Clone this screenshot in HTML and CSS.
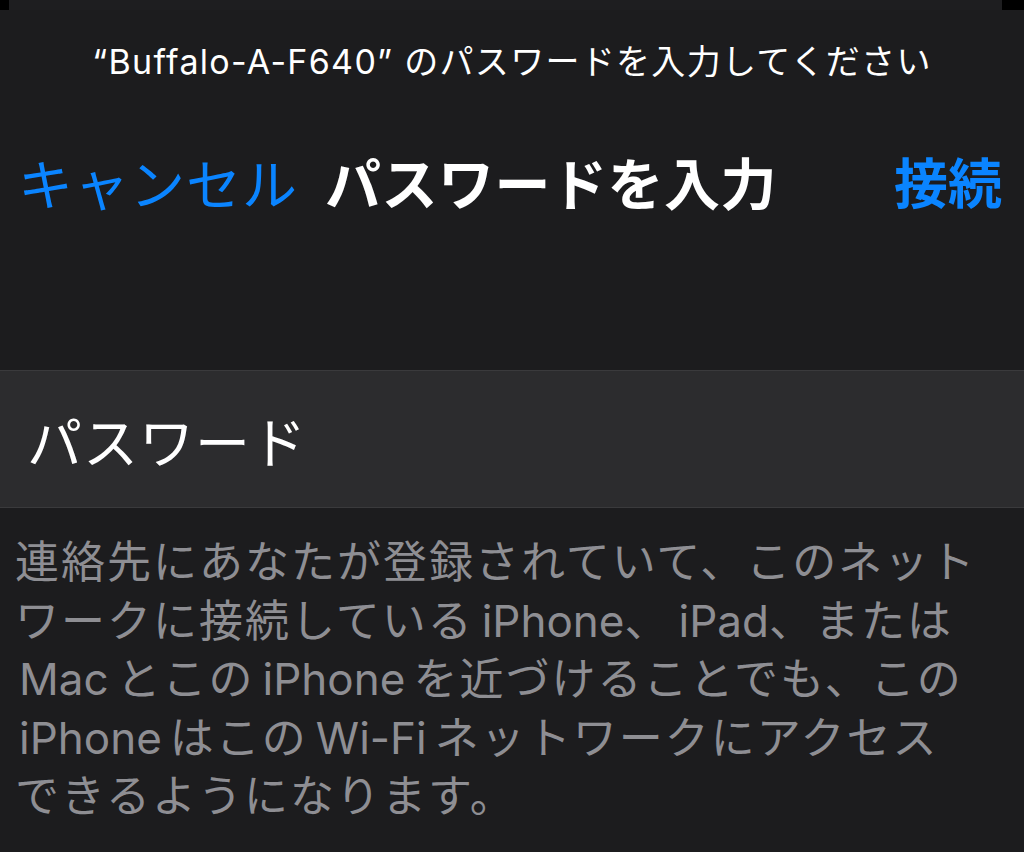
FILE: index.html
```html
<!DOCTYPE html>
<html lang="ja">
<head>
    <meta charset="UTF-8">
    <meta name="viewport" content="width=device-width, initial-scale=1.0">
    <title>パスワードを入力</title>
    <link rel="stylesheet" href="styles.css">
</head>
<body>
    <div class="backdrop">
        <div class="back-sheet"></div>
    </div>
    <div class="sheet">
        <div class="prompt">“Buffalo-A-F640” のパスワードを入力してください</div>
        <div class="navbar">
            <button class="nav-btn cancel">キャンセル</button>
            <div class="nav-title">パスワードを入力</div>
            <div class="spacer"></div>
            <button class="nav-btn join">接続</button>
        </div>
        <div class="field">
            <span class="field-label">パスワード</span>
        </div>
        <p class="footer">
            連絡先にあなたが登録されていて、このネット<br>
            ワークに接続している<span class="latin tight">iPhone</span>、<span class="latin tight">iPad</span>、または<br>
            <span class="latin first">Mac</span>とこの<span class="latin">iPhone</span>を近づけることでも、この<br>
            <span class="latin first">iPhone</span>はこの<span class="latin">Wi-Fi</span>ネットワークにアクセス<br>
            できるようになります。
        </p>
    </div>
</body>
</html>
```

FILE: styles.css
```css
body {
    margin: 0;
    background-color: #000;
    font-family: Inter, "Noto Sans CJK JP", sans-serif;
    color: #fff;
    height: 100vh;
    display: flex;
    flex-direction: column;
}
.backdrop {
    height: 10px;
    display: flex;
}
.back-sheet {
    flex: 1;
    margin: 0 22px 0 9px;
    background: #1e1e20;
}
.sheet {
    flex: 1;
    background: #1c1c1e;
}
.prompt {
    padding-top: 32px;
    font-size: 34px;
    line-height: 40px;
    text-align: center;
    letter-spacing: 1.3px;
}
.navbar {
    display: flex;
    align-items: center;
    margin-top: 68px;
    height: 70px;
    padding: 0 22px 0 18px;
}
.nav-btn {
    background: none;
    border: none;
    padding: 0;
    font-family: inherit;
    font-size: 55px;
    line-height: 70px;
    color: #0a84ff;
    letter-spacing: 1px;
    cursor: pointer;
}
.join {
    font-weight: 700;
    font-size: 54px;
    letter-spacing: 0;
}
.nav-title {
    margin-left: 27px;
    font-size: 56px;
    font-weight: 600;
    line-height: 70px;
    letter-spacing: 0.5px;
}
.spacer {
    flex: 1;
}
.field {
    margin-top: 150px;
    height: 136px;
    display: flex;
    align-items: center;
    padding-left: 27px;
    background: #2c2c2e;
    border-top: 1px solid #3a3a3c;
    border-bottom: 1px solid #3a3a3c;
}
.field-label {
    font-size: 55px;
    letter-spacing: 1px;
}
.footer {
    margin: 0;
    padding: 25px 0 0 15px;
    font-size: 44px;
    line-height: 58.5px;
    letter-spacing: 2px;
    color: #8e8e93;
}
.latin {
    letter-spacing: 0;
    margin: 0 8px;
}
.latin.first {
    margin-left: 4px;
}
.latin.tight {
    margin-right: 0;
}
```
